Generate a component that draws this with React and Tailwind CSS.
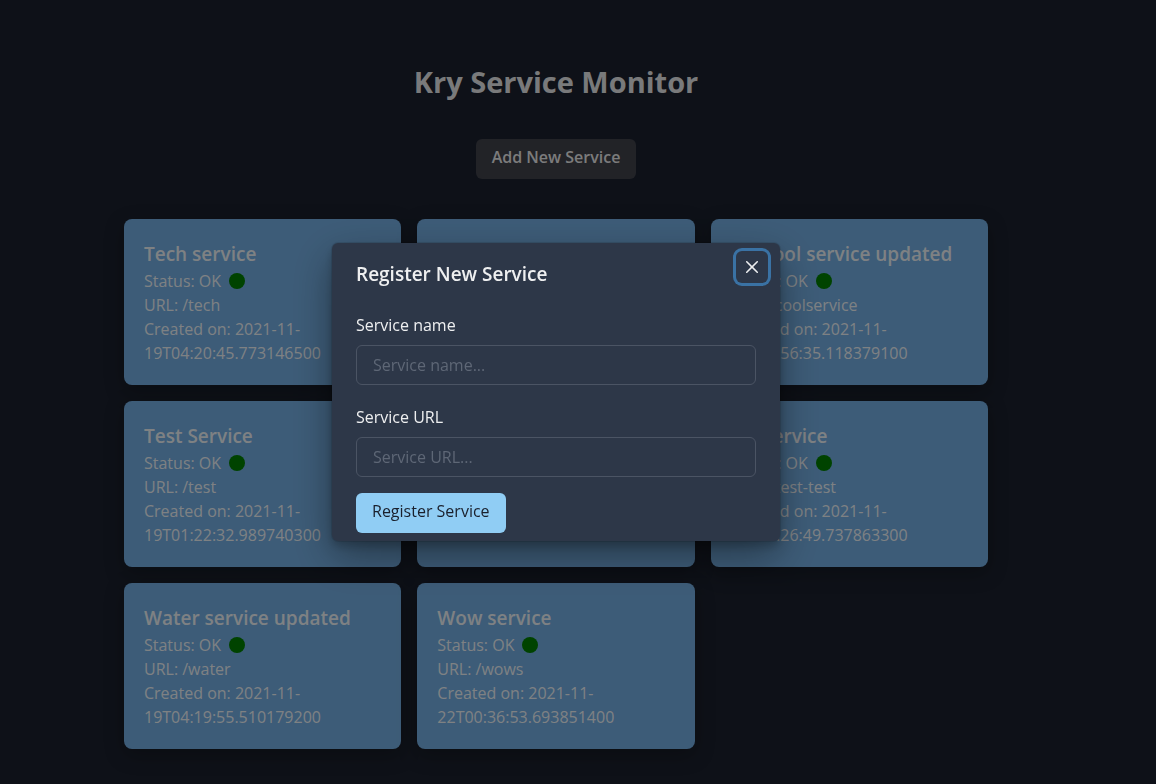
import React from "react";

const services = [
  { name: "Tech service", url: "/tech", created: "2021-11-19T04:20:45.773146500" },
  { name: "Shop service", url: "/shop", created: "2021-11-19T02:14:21.402817300" },
  { name: "My cool service updated", url: "/coolservice", created: "2021-11-19T01:56:35.118379100" },
  { name: "Test Service", url: "/test", created: "2021-11-19T01:22:32.989740300" },
  { name: "Mail service", url: "/mail", created: "2021-11-19T03:41:08.226590100" },
  { name: "My service", url: "/test-test", created: "2021-11-19T01:26:49.737863300" },
  { name: "Water service updated", url: "/water", created: "2021-11-19T04:19:55.510179200" },
  { name: "Wow service", url: "/wows", created: "2021-11-22T00:36:53.693851400" },
];

function ServiceCard({ service }) {
  return (
    <li className="rounded-lg bg-[#76b1e6] p-5 shadow-[0_6px_20px_rgba(0,0,0,0.25)]">
      <h2 className="text-[19px] leading-[30px] font-semibold">{service.name}</h2>
      <p className="flex items-center gap-2">
        Status: OK
        <span className="size-4 rounded-full bg-[#008000]" />
      </p>
      <p>URL: {service.url}</p>
      <p>Created on: {service.created}</p>
    </li>
  );
}

function Field({ id, label }) {
  return (
    <div>
      <label htmlFor={id} className="mb-2 block font-medium">
        {label}
      </label>
      <input
        id={id}
        type="text"
        placeholder={label + "..."}
        className="h-10 w-full rounded-md border border-[#4b5464] bg-transparent px-4 outline-none placeholder:text-[#5e6776]"
      />
    </div>
  );
}

function RegisterDialog() {
  return (
    <div className="fixed inset-0 flex items-center justify-center bg-black/48 pr-11">
      <section
        role="dialog"
        aria-modal="true"
        aria-labelledby="dialog-title"
        className="relative w-full max-w-md rounded-md bg-[#2d3748] shadow-[0_0_0_1px_rgba(0,0,0,0.1),0_5px_10px_rgba(0,0,0,0.2),0_15px_40px_rgba(0,0,0,0.4)]"
      >
        <h2 id="dialog-title" className="px-6 py-4 text-[19px] leading-[30px] font-semibold">
          Register New Service
        </h2>
        <button
          type="button"
          aria-label="Close"
          className="absolute top-2 right-3 flex size-8 items-center justify-center rounded-md ring-3 ring-[#3a72a4]"
        >
          <svg viewBox="0 0 24 24" className="size-3" fill="currentColor" aria-hidden="true">
            <path d="M.439,21.44a1.5,1.5,0,0,0,2.122,2.121L11.823,14.3a.25.25,0,0,1,.354,0l9.262,9.263a1.5,1.5,0,1,0,2.122-2.121L14.3,12.177a.25.25,0,0,1,0-.354l9.263-9.262A1.5,1.5,0,0,0,21.439.44L12.177,9.7a.25.25,0,0,1-.354,0L2.561.44A1.5,1.5,0,0,0,.439,2.561L9.7,11.823a.25.25,0,0,1,0,.354Z" />
          </svg>
        </button>
        <form className="px-6 py-2">
          <div className="flex flex-col gap-5">
            <Field id="service-name" label="Service name" />
            <Field id="service-url" label="Service URL" />
          </div>
          <button type="submit" className="mt-4 flex h-10 items-center rounded-md bg-[#90cdf4] px-4 pb-1 text-[#1a202c]">
            Register Service
          </button>
        </form>
      </section>
    </div>
  );
}

export default function App() {
  return (
    <div className="min-h-screen bg-[#1b212e] pr-11 font-['Open_Sans',sans-serif] text-base text-white/92">
      <main className="mx-auto flex max-w-4xl flex-col items-center px-4 pt-16 pb-9">
        <h1 className="mb-[39px] text-[29px] leading-9 font-bold">Kry Service Monitor</h1>
        <button
          type="button"
          className="mb-10 flex h-10 items-center rounded-md bg-[#41434c] px-4 pb-1 font-semibold"
        >
          Add New Service
        </button>
        <ul className="grid w-full grid-cols-3 gap-4">
          {services.map((service) => (
            <ServiceCard key={service.name} service={service} />
          ))}
        </ul>
      </main>
      <RegisterDialog />
    </div>
  );
}
